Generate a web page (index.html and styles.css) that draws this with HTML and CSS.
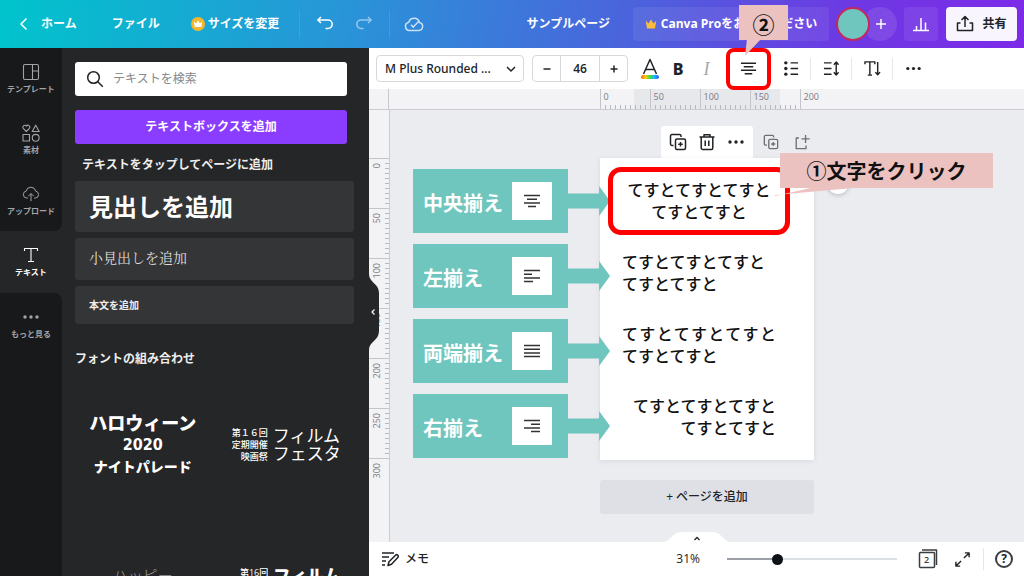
FILE: index.html
```html
<!DOCTYPE html>
<html lang="ja">
<head>
<meta charset="utf-8">
<meta name="viewport" content="width=device-width, initial-scale=1">
<title>サンプルページ</title>
<link rel="stylesheet" href="styles.css">
</head>
<body>
<svg class="defs" aria-hidden="true">
  <symbol id="i-dup" viewBox="0 0 18 18"><path d="M4.500 12.500H3A1.500 1.500 0 0 1 1.500 11V3A1.500 1.500 0 0 1 3 1.500h7.500A1.500 1.500 0 0 1 12 3v1"/><rect x="6.500" y="6" width="10" height="10.500" rx="1.500"/><path d="M11.500 9v4.500M9.200 11.250h4.600"/></symbol>
  <symbol id="i-dots" viewBox="0 0 18 18"><g fill="currentColor" stroke="none"><circle cx="3" cy="9" r="1.700"/><circle cx="9" cy="9" r="1.700"/><circle cx="15" cy="9" r="1.700"/></g></symbol>
  <symbol id="i-center" viewBox="0 0 18 18"><path d="M1 3.500h16M4 7.200h10M1 10.900h16M5 14.600h8"/></symbol>
  <symbol id="i-left" viewBox="0 0 18 18"><path d="M1 3.500h16M1 7.200h8M1 10.900h16M1 14.600h9"/></symbol>
  <symbol id="i-justify" viewBox="0 0 18 18"><path d="M1 3.500h16M1 7.200h16M1 10.900h16M1 14.600h16"/></symbol>
  <symbol id="i-right" viewBox="0 0 18 18"><path d="M1 3.500h16M8 7.200h9M1 10.900h16M8 14.600h9"/></symbol>
</svg>

<header class="topbar">
  <button class="top-btn home"><svg class="icon chevron" viewBox="0 0 12 16"><path d="M8.500 2.500 3 8l5.500 5.500"/></svg>ホーム</button>
  <button class="top-btn file">ファイル</button>
  <button class="top-btn resize"><svg class="coin" viewBox="0 0 14 14"><circle cx="7" cy="7" r="7" fill="#f6b62c"/><path d="M2.800 4.500 5 6.500 7 3.200l2 3.300 2.200-2-.900 5.500H3.700z" fill="#fff"/></svg>サイズを変更</button>
  <span class="top-sep"></span>
  <button class="top-btn undo" aria-label="元に戻す"><svg class="icon" viewBox="0 0 18 18"><path d="M5 2 1.800 5 5 8M2 5h10a4.200 4.200 0 0 1 0 8.400H9.500"/></svg></button>
  <button class="top-btn redo" aria-label="やり直す"><svg class="icon" viewBox="0 0 18 18"><path d="M13 2l3.200 3L13 8M16 5H6a4.200 4.200 0 0 0 0 8.400h2.500"/></svg></button>
  <span class="top-sep"></span>
  <button class="top-btn saved" aria-label="保存済み"><svg class="icon" viewBox="0 0 20 18"><path d="M5.500 15.500A4.200 4.200 0 0 1 4.800 7.200 5.500 5.500 0 0 1 15.400 7.400a4.100 4.100 0 0 1-.700 8.100z"/><path d="m7 9.800 2.300 2.300 6-6.300"/></svg></button>
  <span class="doc-title">サンプルページ</span>
  <button class="pro"><svg viewBox="0 0 12 12"><path d="M.800 2.800 3.500 5.500 6 1.500l2.500 4 2.700-2.700-1.200 7.700H2z" fill="#fdbc3c"/></svg>Canva Proをお試しください</button>
  <div class="people"><span class="avatar"></span><button class="invite" aria-label="メンバーを追加"><svg class="icon" viewBox="0 0 12 12"><path d="M6 1v10M1 6h10"/></svg></button></div>
  <button class="stats" aria-label="分析"><svg class="icon" viewBox="0 0 18 18"><path d="M1 15.500h16M4.500 15v-4M9 15V3M13.500 15V7.500"/></svg></button>
  <button class="share"><svg class="icon" viewBox="0 0 18 18"><path d="M9 12V1.800M5.500 5 9 1.600 12.500 5M4.500 8H1.500v7.500h15V8h-3"/></svg>共有</button>
</header>

<div class="body">
  <nav class="rail">
    <button class="rail-item"><svg class="icon" viewBox="0 0 18 18"><rect x="1.500" y="1.500" width="15" height="15" rx="1.500"/><path d="M10.500 1.500v15M10.500 8h6"/></svg>テンプレート</button>
    <button class="rail-item"><svg class="icon" viewBox="0 0 18 18"><path d="M4.300 7.500 1.200 4.300a1.800 1.800 0 0 1 3.100-2.200 1.800 1.800 0 0 1 3.100 2.200zM13.700 1.200l3.500 6.300h-7z"/><rect x="1" y="10.500" width="6.500" height="6.500"/><circle cx="13.700" cy="13.800" r="3.400"/></svg>素材</button>
    <button class="rail-item before"><svg class="icon" viewBox="0 0 20 18"><path d="M6.500 13.500H5A3.900 3.900 0 0 1 4.600 5.800 5.400 5.400 0 0 1 15.200 5.800 3.900 3.900 0 0 1 15 13.500h-1.500M10 17V8.800M7 11.500l3-3 3 3"/></svg>アップロード</button>
    <button class="rail-item active"><svg class="icon" viewBox="0 0 18 18"><path d="M2.500 5V2.500h13V5M9 2.500v13M6 15.500h6"/></svg>テキスト</button>
    <button class="rail-item after"><svg class="icon"><use href="#i-dots"/></svg>もっと見る</button>
    <div class="rail-rest"></div>
  </nav>

  <aside class="panel">
    <div class="panel-scroll">
      <label class="search"><svg class="icon" viewBox="0 0 18 18"><circle cx="7.500" cy="7.500" r="5.800"/><path d="m11.800 11.800 5 5"/></svg><input type="search" placeholder="テキストを検索" aria-label="テキストを検索"></label>
      <button class="add-box">テキストボックスを追加</button>
      <h2 class="panel-title indent">テキストをタップしてページに追加</h2>
      <div class="styles">
        <button class="style-card heading">見出しを追加</button>
        <button class="style-card sub">小見出しを追加</button>
        <button class="style-card text">本文を追加</button>
      </div>
      <h2 class="panel-title">フォントの組み合わせ</h2>
      <div class="combos">
        <button class="combo halloween"><span class="l1">ハロウィーン</span><span class="l2">2020</span><span class="l3">ナイトパレード</span></button>
        <button class="combo film"><span class="small">第１６回<br>定期開催<br>映画祭</span><span class="big">フィルム<br>フェスタ</span></button>
        <button class="combo clipped happy">ハッピー</button>
        <button class="combo clipped film bold"><span class="small">第16回</span><span class="big">フィルム</span></button>
      </div>
    </div>
    <button class="collapse" aria-label="パネルを閉じる"><svg viewBox="0 0 12 76"><path d="M0 0c0 9 10 9 10 19v38c0 10-10 10-10 19z" fill="#252627"/><path d="M5.500 35.500 3 38l2.500 2.500" fill="none" stroke="#fff" stroke-width="1.200"/></svg></button>
  </aside>

  <main class="editor">
    <div class="toolbar">
      <div class="font-pick"><select aria-label="フォント"><option>M Plus Rounded ...</option></select><svg class="icon" viewBox="0 0 12 12"><path d="m2 4 4 4 4-4"/></svg></div>
      <div class="size-pick"><button aria-label="小さく"><svg class="icon" viewBox="0 0 10 10"><path d="M1.500 5h7"/></svg></button><input type="text" value="46" aria-label="フォントサイズ"><button aria-label="大きく"><svg class="icon" viewBox="0 0 10 10"><path d="M1.500 5h7M5 1.500v7"/></svg></button></div>
      <div class="tools">
        <button class="tool color" aria-label="文字色"><svg class="icon" viewBox="0 0 20 20"><path d="M3.500 16 10 1.500 16.500 16M6 11.500h8"/></svg></button>
        <button class="tool bold">B</button>
        <button class="tool italic">I</button>
        <button class="tool align marked" aria-label="配置"><svg class="icon"><use href="#i-center"/></svg></button>
        <button class="tool list" aria-label="リスト"><svg class="icon" viewBox="0 0 18 18"><path d="M8 3h8M8 9h8M8 15h8"/><g fill="currentColor" stroke="none"><circle cx="3" cy="3" r="1.800"/><circle cx="3" cy="9" r="1.800"/><circle cx="3" cy="15" r="1.800"/></g></svg></button>
        <span class="sep"></span>
        <button class="tool" aria-label="スペース"><svg class="icon" viewBox="0 0 18 18"><path d="M1 3h8M1 9h8M1 15h8M14 2.500v13M11.500 5 14 2.200 16.500 5M11.500 13l2.500 2.800 2.500-2.800"/></svg></button>
        <span class="sep"></span>
        <button class="tool" aria-label="縦書き"><svg class="icon" viewBox="0 0 18 18"><path d="M1 4.500V2h10.500v2.500M6.200 2v14M4 16h4.500M14.500 2v13.500M12 12.800l2.500 2.900 2.500-2.900"/></svg></button>
        <span class="sep"></span>
        <button class="tool" aria-label="その他"><svg class="icon"><use href="#i-dots"/></svg></button>
      </div>
    </div>

    <div class="ruler-x"><span class="corner"></span><div class="track-x"><div class="scale-x"><span>0</span><span>50</span><span>100</span><span>150</span><span>200</span></div></div></div>

    <div class="work">
      <div class="ruler-y"><div class="scale-y"><span><b>0</b></span><span><b>50</b></span><span><b>100</b></span><span><b>150</b></span><span><b>200</b></span><span><b>250</b></span><span><b>300</b></span></div></div>
      <div class="canvas">
        <div class="sheet-wrap">
          <div class="sheet-tools">
            <div class="float-menu">
              <button aria-label="複製"><svg class="icon"><use href="#i-dup"/></svg></button>
              <button aria-label="削除"><svg class="icon" viewBox="0 0 18 18"><path d="M1.500 4h15M6 4V1.800h6V4M3.200 4v11a1.500 1.500 0 0 0 1.500 1.500h8.600a1.500 1.500 0 0 0 1.500-1.500V4M7.200 7.500v5.500M10.800 7.500v5.500"/></svg></button>
              <button aria-label="その他"><svg class="icon"><use href="#i-dots"/></svg></button>
            </div>
            <button class="ghost" aria-label="ページを複製"><svg class="icon"><use href="#i-dup"/></svg></button>
            <button class="ghost" aria-label="ページを追加"><svg class="icon" viewBox="0 0 18 18"><path d="M5.500 4.500H2.500v12h11v-3.500M13 1v9M8.500 5.500h9"/></svg></button>
          </div>
          <div class="sheet">
            <p class="sample center">てすとてすとてすと<br>てすとてすと</p>
            <p class="sample">てすとてすとてすと<br>てすとてすと</p>
            <p class="sample"><span class="spread">てすとてすとてすと</span>てすとてすと</p>
            <p class="sample right">てすとてすとてすと<br>てすとてすと</p>

            <div class="legend">
              <div class="legend-row"><div class="legend-box"><span class="legend-name">中央揃え</span><span class="chip"><svg class="icon"><use href="#i-center"/></svg></span></div><span class="arrow"></span></div>
              <div class="legend-row"><div class="legend-box"><span class="legend-name">左揃え</span><span class="chip"><svg class="icon"><use href="#i-left"/></svg></span></div><span class="arrow"></span></div>
              <div class="legend-row"><div class="legend-box"><span class="legend-name">両端揃え</span><span class="chip"><svg class="icon"><use href="#i-justify"/></svg></span></div><span class="arrow"></span></div>
              <div class="legend-row"><div class="legend-box"><span class="legend-name">右揃え</span><span class="chip"><svg class="icon"><use href="#i-right"/></svg></span></div><span class="arrow"></span></div>
            </div>
            <button class="rotate" aria-label="コメント"></button>
            <div class="frame"></div>
            <svg class="tail-one" viewBox="0 0 90 10"><path d="M0 9 40 0h50L0 8z" fill="#ecc2c1"/></svg>
            <div class="callout one">①文字をクリック</div>
          </div>
          <button class="add-page">+ ページを追加</button>
        </div>
      </div>
    </div>

    <footer class="status">
      <button class="notes"><svg class="icon" viewBox="0 0 18 18"><path d="M1 3h12M1 7h7M1 11h4M1 15h3M7 15.500l1-3.800 6.500-6.500a1.500 1.500 0 0 1 2.300 2.300L10.500 14.200z"/></svg>メモ</button>
      <button class="pull" aria-label="ページ一覧"><svg viewBox="0 0 68 10"><path d="M0 10C8 10 9 0 18 0h32c9 0 10 10 18 10z" fill="#fff"/><path d="m31.500 8 2.500-2.500L36.500 8" fill="none" stroke="#222" stroke-width="1.300"/></svg></button>
      <label class="zoom"><span>31%</span><input type="range" min="0" max="100" value="28"></label>
      <button class="pages" aria-label="ページ"><svg class="icon" viewBox="0 0 20 20"><rect x="1.500" y="3.500" width="15" height="15" rx="1"/><path d="M4 1h14.500v15"/></svg><span>2</span></button>
      <button class="full" aria-label="全画面"><svg class="icon" viewBox="0 0 18 18"><path d="M10.500 7.500 16 2M11.500 2H16v4.500M7.500 10.500 2 16M2 11.500V16h4.500"/></svg></button>
      <span class="sep"></span>
      <button class="help" aria-label="ヘルプ">?</button>
    </footer>

    <div class="callout two">②<svg viewBox="0 0 20 18"><path d="M3 0h14L1 17z" fill="#ecc2c1"/></svg></div>
  </main>
</div>
</body>
</html>
```
FILE: styles.css
```css
* { box-sizing: border-box; }

body {
  margin: 0;
  height: 100vh;
  overflow: hidden;
  display: flex;
  flex-direction: column;
  font-family: "Open Sans", "Noto Sans CJK JP", sans-serif;
  font-size: 12px;
  line-height: 16px;
  color: #202326;
}

button, input, select { font: inherit; color: inherit; }
button { border: 0; padding: 0; background: none; display: flex; align-items: center; justify-content: center; flex: none; }
h2, p { margin: 0; }
.defs { position: absolute; width: 0; height: 0; }
.icon { width: 18px; height: 18px; flex: none; fill: none; stroke: currentColor; stroke-width: 1.5; stroke-linejoin: round; }

/* top bar */
.topbar {
  flex: none;
  height: 48px;
  display: flex;
  align-items: center;
  padding: 0 7px 0 18px;
  color: #fff;
  font-weight: 600;
  background: linear-gradient(100deg, #00c4cc 0%, #2994d8 34%, #4c62dc 62%, #6e38e3 83%, #7d2ae8 100%);
}
.chevron { width: 12px; height: 16px; margin-right: 11px; }
.file { margin-left: 35px; }
.resize { margin-left: 31px; gap: 3px; }
.coin { width: 14px; height: 14px; }
.top-sep { width: 1px; height: 28px; background: rgba(255, 255, 255, .1); margin: 0 16px 0 20px; }
.redo { margin-left: 21px; opacity: .5; }
.redo + .top-sep { margin: 0 14px 0 16px; }
.saved { opacity: .75; }
.saved .icon { width: 20px; }
.doc-title { margin-left: auto; margin-right: 23px; }
.pro { width: 196px; height: 34px; gap: 4px; border-radius: 4px; background: rgba(255, 255, 255, .07); font-weight: 700; }
.pro svg { width: 12px; height: 12px; }
.people { display: flex; margin-left: 7px; }
.avatar { width: 34px; height: 34px; border-radius: 50%; background: #6fc6be; border: 2px solid #c3295f; z-index: 1; }
.invite { width: 34px; height: 34px; margin-left: -7px; padding-left: 2px; border-radius: 50%; background: rgba(255, 255, 255, .1); }
.invite .icon { width: 12px; height: 12px; }
.stats { width: 34px; height: 34px; margin: 0 8px 0 7px; border-radius: 4px; background: rgba(255, 255, 255, .08); }
.share { width: 71px; height: 34px; gap: 8px; border-radius: 4px; background: #f8f5fe; color: #202326; font-weight: 700; }

.body { flex: 1; min-height: 0; display: flex; }

/* icon rail */
.rail { width: 62px; flex: none; display: flex; flex-direction: column; background: #252627; }
.rail-item { height: 61px; flex-direction: column; gap: 2px; background: #18191b; color: #a3a4a6; font-size: 8px; line-height: 12px; font-weight: 700; }
.rail-item .icon { stroke-width: 1.1; }
.rail-item.before { border-bottom-right-radius: 8px; }
.rail-item.active { height: 62px; background: #252627; color: #fff; }
.rail-item.after { border-top-right-radius: 8px; }
.rail-rest { flex: 1; background: #18191b; }

/* text panel */
.panel { width: 307px; flex: none; position: relative; z-index: 2; background: #252627; color: #eee; }
.panel-scroll { height: 100%; overflow: hidden; padding: 14px 15px 0 13px; }
.search { display: flex; align-items: center; gap: 9px; height: 34px; margin-right: 7px; padding: 0 11px; border-radius: 3px; background: #fff; color: #202326; }
.search input { flex: 1; min-width: 0; border: 0; outline: 0; padding: 0; background: none; }
.search input::placeholder { color: #85888c; }
.add-box { width: calc(100% - 7px); height: 34px; margin-top: 14px; border-radius: 3px; background: #8b3dff; color: #fff; font-weight: 700; }
.panel-title { font-size: 12px; line-height: 16px; font-weight: 700; }
.indent { margin: 13px 0 8px 7px; }
.styles { display: flex; flex-direction: column; gap: 6px; margin-bottom: 27px; }
.style-card { justify-content: flex-start; padding-left: 14px; border-radius: 3px; background: #343537; }
.heading { height: 51px; font-size: 24px; font-weight: 700; color: #fff; }
.sub { height: 42px; font-size: 14px; font-family: "Liberation Serif", "Noto Serif CJK JP", "Noto Sans CJK JP", serif; color: #ddd; }
.text { height: 38px; font-size: 10px; font-weight: 700; }
.combos { display: grid; grid-template-columns: 1fr 1fr; gap: 8px; margin-top: 10px; }
.combo { height: 136px; color: #fff; }
.halloween { flex-direction: column; font-weight: 900; line-height: 22px; }
.l1 { font-size: 18px; }
.l2 { font-family: "DejaVu Sans Condensed", "DejaVu Sans", sans-serif; font-size: 16px; font-weight: 700; }
.l3 { font-size: 14px; }
.film { gap: 5px; }
.film .small { font-size: 9px; line-height: 12px; text-align: right; font-weight: 500; }
.film .big { font-size: 17px; line-height: 18px; text-align: left; }
.clipped { align-items: flex-start; padding-top: 46px; }
.happy { font-size: 15px; font-weight: 300; color: #999; }
.film.bold { padding-left: 8px; }
.film.bold .big { font-weight: 900; }
.collapse { position: absolute; left: 100%; top: 226px; }
.collapse svg { width: 12px; height: 76px; display: block; }

/* editor */
.editor { flex: 1; min-width: 0; position: relative; display: flex; flex-direction: column; background: #ebecf0; }
.toolbar { flex: none; height: 41px; display: flex; align-items: center; gap: 8px; padding: 0 7px; background: #fff; }
.font-pick { position: relative; width: 148px; }
.font-pick select { appearance: none; width: 100%; height: 27px; padding: 0 8px; border: 1px solid #d5d8dd; border-radius: 4px; background: #fff; font-family: "Noto Sans", sans-serif; font-weight: 500; }
.font-pick .icon { position: absolute; right: 7px; top: 8px; width: 12px; height: 12px; pointer-events: none; }
.size-pick { display: flex; width: 96px; height: 27px; border: 1px solid #d5d8dd; border-radius: 4px; font-weight: 600; }
.size-pick button { width: 27px; }
.size-pick .icon { width: 10px; height: 10px; }
.size-pick input { flex: 1; min-width: 0; padding: 0; border: solid #d5d8dd; border-width: 0 1px; text-align: center; background: none; }
.tools { display: flex; align-items: center; }
.tool { width: 30px; height: 34px; }
.tool .icon { width: 17px; height: 17px; }
.tool.color { flex-direction: column; width: 27px; }
.tool.color .icon { width: 20px; height: 20px; }
.color::after { content: ""; width: 18px; height: 4px; margin-top: -3px; border-radius: 2px; background: linear-gradient(90deg, #ff5a1f, #ffd000, #3ddc4a, #18b8ff, #3b4dff); }
.tool.bold { font-family: "Noto Sans", sans-serif; font-size: 16px; font-weight: 800; }
.tool.italic { width: 27px; font-family: "Liberation Serif", serif; font-size: 18px; font-style: italic; color: #a5a8ac; }
.tool.align { width: 45px; height: 42px; margin: 0 6px; }
.marked { border: 4px solid #f00; border-radius: 8px; position: relative; z-index: 3; }
.tool.list { width: 28px; }
.tools .sep, .status .sep { width: 1px; height: 22px; background: #e6e7ea; }
.tools .sep { margin: 0 5px; }

.ruler-x { flex: none; height: 21px; display: flex; background: #f3f3f6; border-bottom: 1px solid #cccdd2; color: #797b82; font-size: 9px; }
.corner { width: 20px; border-right: 1px solid #c8c9ce; }
.track-x { flex: 1; display: flex; justify-content: center; }
.scale-x { width: 214px; display: flex; background: repeating-linear-gradient(90deg, #b8b9be 0 1px, transparent 1px 5px) 0 100% / 200px 4px no-repeat, linear-gradient(#e7e8eb, #e7e8eb) 34px 0 / 146px 100% no-repeat; }
.scale-x span { flex: none; width: 50px; padding-left: 3px; border-left: 1px solid #c4c5ca; }
.work { flex: 1; min-height: 0; display: flex; }
.ruler-y { width: 21px; flex: none; padding-top: 48px; overflow: hidden; background: #f3f3f6; border-right: 1px solid #cccdd2; color: #797b82; font-size: 9px; line-height: 12px; }
.scale-y { background: repeating-linear-gradient(#b8b9be 0 1px, transparent 1px 5px) 100% 0 / 4px 300px no-repeat; }
.scale-y span { display: flex; height: 50px; padding: 4px 0 0 2px; border-top: 1px solid #c4c5ca; align-items: flex-start; }
.scale-y b { font-weight: 400; writing-mode: vertical-rl; transform: rotate(180deg); }

.canvas { flex: 1; display: flex; justify-content: center; align-items: flex-start; padding-top: 16px; }
.sheet-wrap { width: 214px; }
.sheet-tools { display: flex; align-items: center; margin-left: 61px; }
.float-menu { display: flex; align-items: center; justify-content: center; gap: 11px; width: 92px; height: 32px; flex: none; background: #fff; border-radius: 3px 3px 0 0; }
.ghost { color: #6d7075; margin-left: 10px; }
.ghost + .ghost { margin-left: 15px; }
.ghost .icon { width: 16px; height: 16px; }
.sheet { position: relative; display: flex; flex-direction: column; gap: 28px; padding: 21px 38px 21px 22px; background: #fff; box-shadow: 0 1px 5px rgba(60, 60, 90, .1); }
.sample { font-size: 16px; line-height: 22px; font-weight: 500; color: #111; }
.center { text-align: center; }
.right { text-align: right; }
.spread { display: block; text-align-last: justify; }
.add-page { width: 100%; height: 34px; margin-top: 20px; border-radius: 3px; background: #dfe0e6; font-weight: 500; }

/* annotations laid over the canvas */
.legend { position: absolute; top: 11px; right: calc(100% - 10px); width: 197px; display: flex; flex-direction: column; gap: 11px; }
.legend-row { display: flex; align-items: center; }
.legend-box { flex: 1; height: 64px; display: flex; align-items: center; justify-content: space-between; padding: 0 16px 0 10px; background: #6fc6be; color: #fff; font-size: 20px; line-height: 24px; font-weight: 700; }
.legend-name { padding-top: 6px; }
.chip { width: 40px; height: 38px; display: flex; align-items: center; justify-content: center; background: #fff; color: #333; }
.arrow { width: 42px; height: 30px; background: #6fc6be; clip-path: polygon(0 25%, 74% 25%, 74% 0, 100% 50%, 74% 100%, 74% 75%, 0 75%); }
.frame { position: absolute; left: 8px; top: 9px; width: 182px; height: 68px; border: 5px solid #f00; border-radius: 13px; }
.callout { position: absolute; display: flex; align-items: center; justify-content: center; height: 35px; background: #ecc2c1; color: #111; font-family: "Noto Sans CJK JP", sans-serif; font-size: 20px; font-weight: 700; white-space: nowrap; z-index: 4; }
.one { left: 180px; top: -5px; width: 213px; }
.tail-one { position: absolute; left: 175px; top: 29px; width: 90px; height: 10px; z-index: 4; }
.rotate { position: absolute; left: 227px; top: 14px; width: 22px; height: 22px; border-radius: 50%; background: #fff; box-shadow: 0 1px 4px rgba(60, 60, 90, .3); }
.two { left: 370px; top: -43px; width: 49px; font-size: 22px; }
.two svg { position: absolute; left: 5px; top: 34px; width: 20px; height: 18px; }

/* status bar */
.status { flex: none; position: relative; height: 34px; display: flex; align-items: center; padding: 0 11px 0 12px; background: #fff; }
.notes { gap: 6px; font-weight: 500; }
.pull { position: absolute; bottom: 100%; left: 50%; margin-left: -34px; }
.pull svg { width: 68px; height: 10px; display: block; }
.zoom { display: flex; align-items: center; gap: 27px; margin-left: auto; }
.zoom input { appearance: none; width: 170px; height: 12px; margin: 0; background: linear-gradient(90deg, #9ca0a6 28%, #dcdfe4 28%) 0 50% / 100% 2px no-repeat; }
.zoom input::-webkit-slider-thumb { appearance: none; width: 11px; height: 11px; border-radius: 50%; background: #0d1216; }
.pages { position: relative; margin-left: 21px; color: #3a3d41; }
.pages .icon { width: 20px; height: 20px; }
.pages span { position: absolute; left: 6px; top: 5px; font-size: 9px; line-height: 12px; font-weight: 600; }
.full { margin: 0 12px 0 16px; }
.full .icon { width: 17px; height: 17px; }
.help { width: 18px; height: 18px; margin-left: 11px; border: 2px solid #3a3d41; border-radius: 50%; font-weight: 700; line-height: 12px; }
```
